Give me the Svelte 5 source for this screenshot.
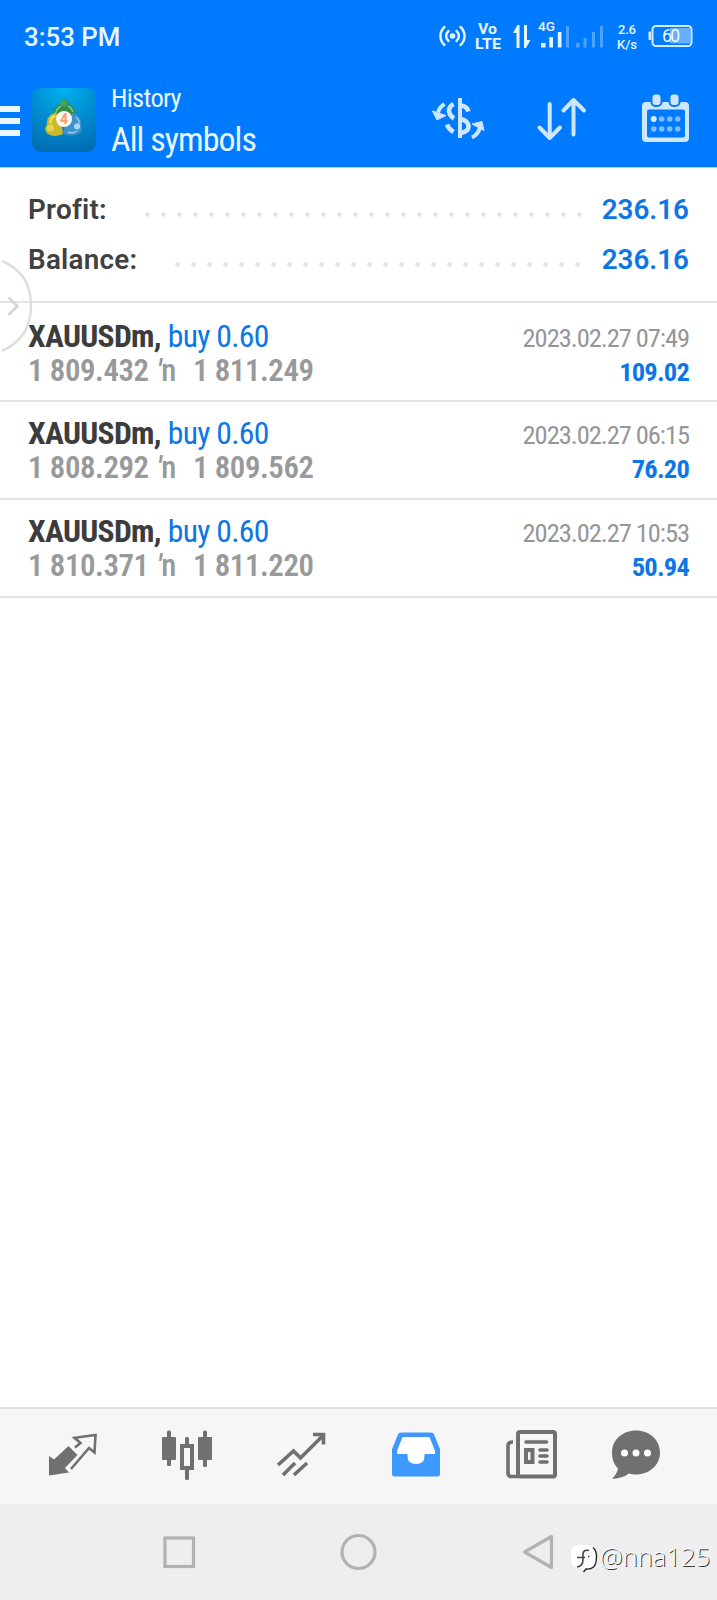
<script lang="ts">
    const summary = [
        { label: 'Profit:', value: '236.16' },
        { label: 'Balance:', value: '236.16' }
    ]

    const deals = [
        { symbol: 'XAUUSDm,', side: 'buy 0.60', open: '1 809.432', close: '1 811.249', time: '2023.02.27 07:49', profit: '109.02' },
        { symbol: 'XAUUSDm,', side: 'buy 0.60', open: '1 808.292', close: '1 809.562', time: '2023.02.27 06:15', profit: '76.20' },
        { symbol: 'XAUUSDm,', side: 'buy 0.60', open: '1 810.371', close: '1 811.220', time: '2023.02.27 10:53', profit: '50.94' }
    ]
</script>

<div class='screen'>
    <header>
        <div class='status'>
            <span class='clock'>3:53 PM</span>
            <svg class='indicators' width='256' height='36' viewBox='438 18 256 36'>
                <g fill='none' stroke='#e6f5ff' stroke-width='2.4' stroke-linecap='round'>
                    <path d='M448.500 31a6.500 6.500 0 0 0 0 10M456.500 31a6.500 6.500 0 0 1 0 10M444.500 27a12 12 0 0 0 0 18M460.500 27a12 12 0 0 1 0 18' />
                </g>
                <circle cx='452.500' cy='36' r='2.800' fill='#e6f5ff' />
                <g fill='#e6f5ff' font-family='Roboto, sans-serif' font-weight='700'>
                    <text x='478' y='33.500' font-size='15' textLength='19' lengthAdjust='spacingAndGlyphs'>Vo</text>
                    <text x='475' y='48.500' font-size='15.500' textLength='26' lengthAdjust='spacingAndGlyphs'>LTE</text>
                    <text x='538' y='31' font-size='13.500' font-weight='500' textLength='17'>4G</text>
                    <text x='618' y='33.500' font-size='13' font-weight='500' textLength='18'>2.6</text>
                    <text x='617' y='49' font-size='13' font-weight='500' textLength='20'>K/s</text>
                </g>
                <path d='M519.500 48V25h-2l-4.500 8h3.500v15zM524 25v23h2l4.500-8H527V25z' fill='#e6f5ff' />
                <path d='M541 43h4.500v4.500H541zM549.300 37h3.700v10.500h-3.700zM557.800 32h3.700v15.500h-3.700z' fill='#e6f5ff' />
                <path d='M566 26h3v21.500h-3zM576 43h3.500v4.500H576zM583.500 38h3v9.500h-3zM592 32h3v15.500h-3zM600 26h3v21.500h-3z' fill='#4da3ff' />
                <rect x='670' y='28' width='20' height='15.500' fill='#66b0ff' />
                <rect x='652.500' y='26' width='39' height='20' rx='3.500' fill='none' stroke='#d5ecff' stroke-width='2' />
                <path d='M651 31.500h-1.500q-1 0-1 1v6.500q0 1 1 1h1.500z' fill='#d5ecff' />
                <text x='662' y='42' font-size='17.500' font-family='Roboto, sans-serif' fill='#f2faff' textLength='18'>60</text>
            </svg>
        </div>
        <div class='toolbar'>
            <div class='burger'><i></i><i></i><i></i></div>
            <svg class='logo' width='64' height='64' viewBox='0 0 64 64'>
                <defs>
                    <radialGradient id='tile' cx='.5' cy='0' r='1.1'>
                        <stop offset='0' stop-color='#00b2ee' />
                        <stop offset='.6' stop-color='#0084c8' />
                        <stop offset='1' stop-color='#0069ad' />
                    </radialGradient>
                </defs>
                <rect width='64' height='64' rx='9' fill='url(#tile)' />
                <path d='M32 11c3 0 5 2 4 5 5 1 8 6 8 12 0 3-5 5-12 5s-11-2-11-5c0-6 3-11 8-12-1-3 0-5 3-5z' fill='#2f8c49' />
                <path d='M29 18q-5 3-5.500 8M36 18q4 2 5 6' fill='none' stroke='#7fc97a' stroke-width='1.5' />
                <path d='M24 25c-6 0-10 6-9 12-3 2-2 7 1 9 4 3 11 2 15 0l-2-14z' fill='#c9b82c' />
                <path d='M23 28q-5 2-4.500 7' fill='none' stroke='#f7e869' stroke-width='2' />
                <path d='M41 25c6 1 9 7 8 13 2 3 0 7-3 8-4 2-11 2-15-1l3-13z' fill='#3d92d0' />
                <path d='M44 29q4 4 3 7M36 44q5 2 9-1' fill='none' stroke='#8cc8f0' stroke-width='1.5' />
                <circle cx='18.500' cy='40' r='3.500' fill='#e4d451' />
                <circle cx='45' cy='38.500' r='3' fill='#a5d8f6' />
                <circle cx='32' cy='15' r='3.500' fill='#43a553' />
                <circle cx='32' cy='31' r='8' fill='#fff6ee' />
                <text x='32' y='36' font-size='14' font-weight='700' font-family='Roboto, sans-serif' text-anchor='middle' fill='#f0a070'>4</text>
            </svg>
            <div class='titles'>
                <span class='section'>History</span>
                <span class='filter'>All symbols</span>
            </div>
            <svg class='actions' width='262' height='52' viewBox='430 92 262 52'>
                <g fill='none' stroke='#cfe6ff' stroke-width='4.6'>
                    <path d='M460 98v40' stroke-width='4' />
                    <path d='M453.500 104q-5 3-4.500 7.500 1 4.500 5 7M461.500 105.500q5.500 1 7 6M461 119q7.500 2 7.500 7.500 0 5-7.500 6.500M447 124.500q1.500 4.500 6.500 7.500' />
                    <path d='M444.500 104q-5 3-6.500 8.500' stroke-width='4' />
                    <path d='M472 137.500q6-3 8-10' stroke-width='4' />
                </g>
                <path d='M432.500 111l4.500 9 9-4.500zM472 124l10-2.500 2 9z' fill='#cfe6ff' stroke='#cfe6ff' stroke-linejoin='round' />
                <g fill='none' stroke='#cfe6ff' stroke-width='4' stroke-linecap='round' stroke-linejoin='round'>
                    <path d='M549.700 104v34M539.500 127.500l10.200 10.500 10.300-10.500' />
                    <path d='M573.500 134.500V100M563.500 110.500l10-10.500 10.500 10.500' />
                </g>
                <path fill-rule='evenodd' d='M646 102h39q4 0 4 4v32q0 4-4 4h-39q-4 0-4-4v-32q0-4 4-4zM649 109.500q-2 0-2 2v24q0 2 2 2h34q2 0 2-2v-24q0-2-2-2z' fill='#cfe6ff' />
                <g fill='#cfe6ff' stroke='#007bff' stroke-width='2'>
                    <rect x='651.500' y='93.500' width='10' height='12.500' rx='4' />
                    <rect x='669.500' y='93.500' width='10' height='12.500' rx='4' />
                </g>
                <circle cx='653.700' cy='119' r='3' fill='#d9ecff' />
                <g fill='#7fbdff'>
                    <circle cx='661.700' cy='119' r='2.800' /><circle cx='669.700' cy='119' r='2.800' /><circle cx='677.700' cy='119' r='2.800' />
                    <circle cx='653.700' cy='129' r='2.800' /><circle cx='661.700' cy='129' r='2.800' /><circle cx='669.700' cy='129' r='2.800' /><circle cx='677.700' cy='129' r='2.800' />
                </g>
            </svg>
        </div>
    </header>

    <section class='summary'>
        {#each summary as item}
            <div class='total'>
                <span class='label'>{item.label}</span>
                <span class='dots'></span>
                <span class='value'>{item.value}</span>
            </div>
        {/each}
        <svg class='handle' width='36' height='96' viewBox='0 256 36 96'>
            <path d='M2 261Q31 273 31 305.500T2 351' fill='none' stroke='#dedede' stroke-width='2.5' />
            <path d='M8.500 297.500l9 8.500-9 9' fill='none' stroke='#d4d4d4' stroke-width='2.5' />
        </svg>
    </section>

    <main>
        {#each deals as deal}
            <article>
                <div class='line'>
                    <span class='name'>{deal.symbol}</span>
                    <span class='side'>{deal.side}</span>
                    <span class='time'>{deal.time}</span>
                </div>
                <div class='line'>
                    <span class='price'>{deal.open}</span>
                    <span class='price sep'><i>'</i>n</span>
                    <span class='price'>{deal.close}</span>
                    <span class='profit'>{deal.profit}</span>
                </div>
            </article>
        {/each}
    </main>

    <nav class='tabs'>
        <svg width='717' height='95' viewBox='0 1409 717 95'>
            <path d='M49 1456l5 3.500 14.500-13.500 9 9-12.500 13 4 4.500-20 3z' fill='#707070' />
            <path d='M75 1447.500l5.500-4.500-6-5.200 21-2.800-1 17.500-5.500-4.500L71 1469' fill='none' stroke='#707070' stroke-width='2.6' />
            <g fill='#707070'>
                <rect x='162' y='1437' width='14' height='23' rx='1' /><rect x='167' y='1430.500' width='4' height='35.500' rx='1.500' />
                <rect x='198' y='1437' width='14' height='23' rx='1' /><rect x='203' y='1430.500' width='4' height='36.500' rx='1.500' />
                <rect x='185' y='1437' width='4' height='43' rx='1.500' />
            </g>
            <rect x='182' y='1446' width='10' height='22' fill='#f6f6f6' stroke='#707070' stroke-width='4' />
            <path d='M278 1465l15.500-14 7 7 23-23M283 1475l12-12M294 1475l13-12M313 1434.500h10.500v10' fill='none' stroke='#707070' stroke-width='3.6' />
            <path d='M401 1432.500h30q2 0 3 2l6 14.500v25q0 2.500-2.500 2.500h-43q-2.500 0-2.500-2.500v-25l6-14.500q1-2 3-2z' fill='#3d99ff' />
            <path d='M402.500 1437h27l5.500 14v3h-10.500v2q0 8-8.500 8t-8.500-8v-2H397v-3z' fill='#fff' />
            <g fill='none' stroke='#707070'>
                <rect x='518' y='1432' width='37' height='44.500' rx='2' stroke-width='4' />
                <path d='M513 1442q-5 0-5 4v27q0 3.500 3.500 3.500H518' stroke-width='3.6' />
                <path d='M526 1442h20.500M540 1450h7M540 1456h7M540 1462h7' stroke-width='3.6' stroke-linecap='round' />
                <rect x='526' y='1450' width='6.500' height='12' stroke-width='4' />
            </g>
            <path d='M636 1430.500c13.500 0 24 9.500 24 22s-10.500 22-24 22q-4 0-7-1-6 4.500-17 5.500 5-5 6-10.500c-4-4-6-9-6-16 0-12.500 10.500-22 24-22z' fill='#707070' />
            <g fill='#fff'>
                <circle cx='624.500' cy='1453' r='3.500' /><circle cx='636' cy='1453' r='3.500' /><circle cx='647.500' cy='1453' r='3.500' />
            </g>
        </svg>
    </nav>

    <footer>
        <svg width='717' height='96' viewBox='0 1504 717 96'>
            <g fill='none' stroke='#b2b2b2' stroke-width='3.2'>
                <rect x='165' y='1538' width='28.500' height='28.500' />
                <circle cx='358.500' cy='1552' r='16.500' />
                <path d='M524.500 1552l27-15.500v31z' stroke-linejoin='round' />
            </g>
            <path d='M579 1545h8q8 0 8 8v7q0 8-8 8h-1.500l-1.500 3-2-3h-3q-8 0-8-8v-7q0-8 8-8z' fill='#fff' />
            <path d='M593 1547.500q3.500 3 3.500 9 0 8-3 10.500t-7.500 2l-2.500 3' fill='none' stroke='#222' stroke-width='1.3' />
            <path d='M589 1550.500q-6-1.500-6 4v5q0 7-6 7.500M577 1557.500h8M588 1556.500h1.500' fill='none' stroke='#444' stroke-width='1.6' />
        </svg>
        <span class='watermark'>@nna125</span>
    </footer>
</div>

<style>
    :global(body) {
        margin: 0;
        background: #fff;
    }

    .screen {
        width: 717px;
        height: 1600px;
        display: flex;
        flex-direction: column;
        overflow: hidden;
        background: #fff;
        font-family: Roboto, sans-serif;
    }

    header {
        height: 168px;
        box-sizing: border-box;
        border-bottom: 1px solid #a9d4fa;
        background: #007bff;
        color: #eaf6ff;
        flex-shrink: 0;
    }

    .status {
        height: 72px;
        padding: 0 23px 0 24px;
        display: flex;
        justify-content: space-between;
        align-items: center;
    }

    .clock {
        margin-top: 2px;
        font-size: 25.8px;
        font-weight: 500;
        line-height: 36px;
    }

    .toolbar {
        height: 94px;
        display: flex;
    }

    .burger {
        width: 20px;
        margin: 34px 12px 0 0;
        display: flex;
        flex-direction: column;
        gap: 6.5px;
    }

    .burger i {
        height: 5.5px;
        background: #eaf6ff;
    }

    .logo {
        margin-top: 16px;
    }

    .titles {
        margin: 10px 0 0 15px;
        flex: 1;
        display: flex;
        flex-direction: column;
        font-family: 'Roboto Condensed', Roboto, sans-serif;
        white-space: nowrap;
    }

    .section {
        font-size: 26.5px;
        line-height: 32px;
        letter-spacing: -.7px;
    }

    .filter {
        font-size: 34px;
        line-height: 50px;
        letter-spacing: -.95px;
    }

    .actions {
        margin: 20px 25px 0 0;
    }

    .summary {
        position: relative;
        height: 135px;
        box-sizing: border-box;
        padding: 16px 28px 0 28px;
        border-bottom: 2px solid #e4e4e4;
        flex-shrink: 0;
    }

    .total {
        height: 50px;
        display: flex;
        align-items: center;
        font-size: 27.8px;
        font-weight: 600;
        color: #414141;
    }

    .label {
        letter-spacing: .25px;
    }

    .dots {
        flex: 1;
        height: 5px;
        margin: 11px 20px 0 38px;
        background: radial-gradient(circle at 2.5px 2.5px, #e2e2e2 1.8px, transparent 2.6px) 0 0 / 16px 5px;
    }

    .value {
        color: #0c76e6;
    }

    .handle {
        position: absolute;
        left: 0;
        top: 88px;
        z-index: 1;
    }

    main {
        flex: 1;
        padding-top: 1.5px;
        font-family: 'Roboto Condensed', Roboto, sans-serif;
    }

    article {
        height: 97.7px;
        box-sizing: border-box;
        padding: 14.5px 28px 0;
        border-bottom: 2px solid #e4e4e4;
    }

    .line {
        height: 34px;
        display: flex;
        align-items: center;
        font-size: 31.6px;
        letter-spacing: -.7px;
        white-space: nowrap;
    }

    .name {
        font-weight: 700;
        color: #3c3c3c;
        margin-right: 7px;
    }

    .side {
        color: #0c76e6;
    }

    .time {
        margin: 2px 0 0 auto;
        font-size: 26.5px;
        letter-spacing: -1.05px;
        color: #949699;
    }

    .price {
        font-size: 30.8px;
        font-weight: 600;
        letter-spacing: -.4px;
        color: #97999b;
    }

    .sep {
        margin: 0 17px 0 8px;
        font-weight: 500;
    }

    .profit {
        margin: 2px 0 0 auto;
        font-size: 26.5px;
        font-weight: 700;
        letter-spacing: -.8px;
        color: #0c76e6;
    }

    .tabs {
        height: 97px;
        box-sizing: border-box;
        border-top: 2px solid #dedede;
        background: #f6f6f6;
        flex-shrink: 0;
    }

    .tabs svg, footer svg {
        display: block;
    }

    footer {
        position: relative;
        height: 96px;
        background: #eee;
        flex-shrink: 0;
    }

    .watermark {
        position: absolute;
        right: 7px;
        bottom: 25px;
        font-family: 'Open Sans', sans-serif;
        font-size: 25.6px;
        font-weight: 300;
        line-height: 36px;
        color: #fff;
        text-shadow: 1px 1px 0 #333;
    }
</style>
